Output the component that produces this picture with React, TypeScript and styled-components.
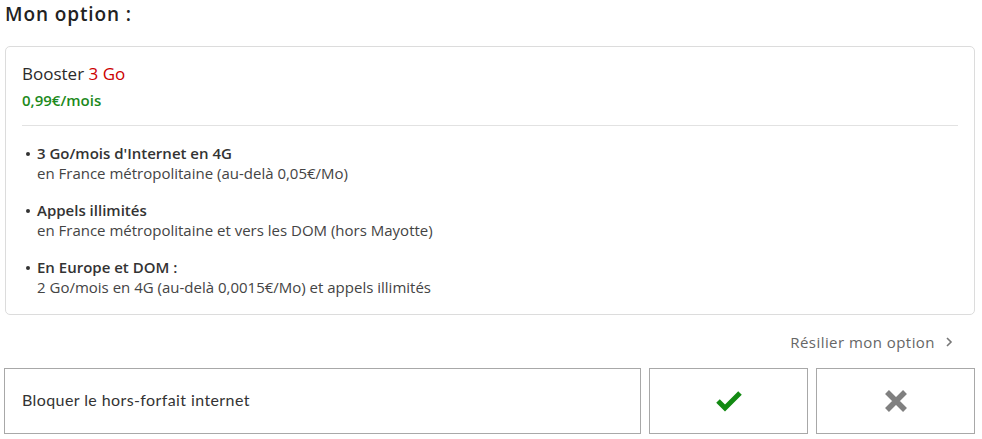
import styled, { createGlobalStyle } from 'styled-components';

const GlobalStyle = createGlobalStyle`
  body {
    margin: 0;
    background: #fff;
    font-family: "Open Sans", "Liberation Sans", sans-serif;
    color: #333;
  }
`;

const Page = styled.div`
  width: 971px;
  padding: 0 7px 0 4px;
`;

const Heading = styled.h2`
  margin: 0;
  padding: 0 0 0 1px;
  height: 46px;
  box-sizing: border-box;
  font-size: 19px;
  line-height: 28px;
  letter-spacing: 0.9px;
  font-weight: 600;
  color: #222;
`;

const Card = styled.div`
  margin-left: 1px;
  border: 1px solid #dcdcdc;
  border-radius: 5px;
  padding: 15px 16px 17px 16px;
`;

const OptionName = styled.div`
  font-size: 17px;
  font-weight: 500;
  color: #2a2a2a;
  margin-bottom: 5px;
`;

const Red = styled.span`
  color: #cc0000;
`;

const Price = styled.div`
  font-size: 15px;
  font-weight: 600;
  color: #1c8a1c;
  padding-bottom: 15px;
  border-bottom: 1px solid #e2e2e2;
`;

const List = styled.ul`
  list-style: none;
  margin: 0;
  padding: 17px 0 0 0;
  display: flex;
  flex-direction: column;
  gap: 17px;
`;

const Item = styled.li`
  display: flex;
  font-size: 15px;
  line-height: 20px;
  color: #444;
`;

const Bullet = styled.span`
  width: 15px;
  flex-shrink: 0;
  padding-left: 4px;
  box-sizing: border-box;
  height: 20px;
  display: flex;
  align-items: center;
  &::before {
    content: '';
    width: 4px;
    height: 4px;
    border-radius: 50%;
    background: #333;
    margin-top: 2px;
  }
`;

const Strong = styled.div`
  font-weight: 600;
  color: #333;
`;

const LinkRow = styled.div`
  display: flex;
  justify-content: flex-end;
  align-items: center;
  height: 53px;
  padding-right: 22px;
  font-size: 15px;
  letter-spacing: 0.45px;
  font-weight: 500;
  color: #666;
  gap: 10px;
`;

const Actions = styled.div`
  display: flex;
  gap: 8px;
`;

const Box = styled.div<{ $w: number }>`
  width: ${(p) => p.$w}px;
  height: 66px;
  border: 1px solid #a8a8a8;
  display: flex;
  align-items: center;
  box-sizing: border-box;
`;

const Label = styled.span`
  font-family: Lato, "Liberation Sans", sans-serif;
  font-size: 16px;
  letter-spacing: 0.4px;
  font-weight: 400;
  color: #333;
  padding: 0 0 3px 17px;
`;

const IconBox = styled(Box)`
  justify-content: center;
`;

const features = [
  ["3 Go/mois d'Internet en 4G", 'en France métropolitaine (au-delà 0,05€/Mo)'],
  ['Appels illimités', 'en France métropolitaine et vers les DOM (hors Mayotte)'],
  ['En Europe et DOM :', '2 Go/mois en 4G (au-delà 0,0015€/Mo) et appels illimités'],
];

const App = () => {
  return (
    <Page>
      <GlobalStyle />
      <Heading>Mon option :</Heading>
      <Card>
        <OptionName>
          Booster <Red>3 Go</Red>
        </OptionName>
        <Price>0,99€/mois</Price>
        <List>
          {features.map(([title, text]) => (
            <Item key={title}>
              <Bullet />
              <div>
                <Strong>{title}</Strong>
                <div>{text}</div>
              </div>
            </Item>
          ))}
        </List>
      </Card>
      <LinkRow>
        Résilier mon option
        <svg width="8" height="12" viewBox="0 0 8 12">
          <path d="M2 2l4 4-4 4" fill="none" stroke="#777" strokeWidth="1.6" />
        </svg>
      </LinkRow>
      <Actions>
        <Box $w={637}>
          <Label>Bloquer le hors-forfait internet</Label>
        </Box>
        <IconBox $w={159}>
          <svg width="28" height="22" viewBox="0 0 28 22">
            <path d="M3 11l7 7L25 3" fill="none" stroke="#138a13" strokeWidth="5" />
          </svg>
        </IconBox>
        <IconBox $w={159}>
          <svg width="24" height="24" viewBox="0 0 24 24">
            <path d="M3 3l18 18M21 3L3 21" fill="none" stroke="#808080" strokeWidth="5.5" />
          </svg>
        </IconBox>
      </Actions>
    </Page>
  );
};

export default App;
